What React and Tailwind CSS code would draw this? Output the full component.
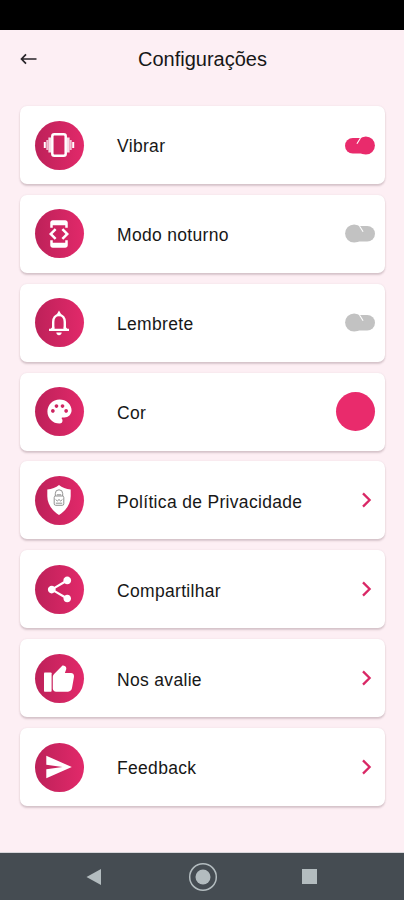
import { useState } from 'react'

import {
  MdDeveloperMode,
  MdPalette,
  MdShare
} from 'react-icons/md'

// ICONOS

function VibrateIcon() {
  return (
    <svg width="32" height="26" viewBox="0 0 32 26" fill="none" stroke="#fff">
      <rect x="9.300" y="2.300" width="13.400" height="21.400" rx="2" strokeWidth="2.500" />
      <path d="M6.800 5.500v15M25.200 5.500v15" strokeWidth="2.800" opacity=".85" />
      <path d="M4.300 8v10M27.700 8v10" strokeWidth="2" opacity=".7" />
      <path d="M1.800 10v6M30.200 10v6" strokeWidth="2" />
    </svg>
  )
}

function BellIcon() {
  return (
    <svg width="24" height="26" viewBox="0 0 24 26" fill="none">
      <path
        d="M6.200 20v-8c0-3.800 2.200-7 5.800-7s5.800 3.200 5.800 7v8"
        stroke="#fff"
        strokeWidth="2.400"
      />
      <path d="M12 .5 14.600 5H9.400zM2 18.800h20v2.300H2zM9.300 22.600h5.400c-.2 1.800-1.200 2.700-2.700 2.700s-2.500-.9-2.700-2.700z" fill="#fff" />
      <path d="M5.500 16.800h1.800v2.400H3.400zM18.500 16.800h-1.800v2.400h3.900z" fill="#fff" />
    </svg>
  )
}

function ShieldIcon() {
  return (
    <svg width="24" height="30" viewBox="0 0 24 30" fill="none">
      <path
        d="M12 0c3 2.500 7.200 4.200 11.700 4.500v6.800C23.700 19 19 25.500 12 30 5 25.500.3 19 .3 11.300V4.500C4.800 4.200 9 2.500 12 0z"
        fill="#fff"
      />
      <g stroke="#858585" strokeWidth=".9">
        <path d="M8.300 11V8.500a3.700 3.700 0 0 1 7.400 0V11" />
        <rect x="7.200" y="11" width="9.600" height="9.300" rx="1.500" />
        <path d="M8.600 14.500l1.700 1.500 1.700-1.500 1.700 1.500 1.700-1.500M8.800 18.200h6.400M9.800 9.800h4.400" />
      </g>
    </svg>
  )
}

function ThumbIcon() {
  return (
    <svg width="30" height="27" viewBox="0 0 30 27" fill="#fff">
      <rect x="0" y="7.500" width="7.600" height="19.200" rx=".8" />
      <path d="M8.800 11.800c0-1 .4-1.900 1.100-2.600L18 .9c.9-.9 4.300.1 4.300 2.300 0 1.600-.9 3.100-1.400 4.700h6.100c1.700 0 3 1.300 3 3 0 .9-.1 1.800-.3 2.700l-1.700 9.500c-.3 2.100-1.900 3.600-4 3.600H12.100c-1.900 0-3.300-1.400-3.300-3.300z" />
    </svg>
  )
}

function SendIcon() {
  return (
    <svg width="26" height="24" viewBox="0 0 26 24" fill="#fff">
      <path d="M.300.800 25.800 12 .300 23.200v-9L16.500 12 .300 9.800z" />
    </svg>
  )
}

function ChevronIcon() {
  return (
    <svg
      className="mr-[2px]"
      width="12"
      height="18"
      viewBox="0 0 12 18"
      fill="none"
      stroke="#d92765"
      strokeWidth="2.300"
    >
      <path d="M2 2.400 8.600 9 2 15.600" />
    </svg>
  )
}

// INTERRUPTOR

function Toggle({ active, onClick }) {
  return (
    <button
      className={active ? 'text-[#e92b6c]' : 'text-[#c2c2c2]'}
      onClick={onClick}
    >
      <svg
        className={active ? 'block' : 'block -scale-x-100'}
        width="30"
        height="19"
        viewBox="0 0 30 19"
        fill="currentColor"
      >
        <rect x="0" y="2" width="28" height="15.500" rx="7.750" />
        <circle cx="20.800" cy="9.500" r="9.100" />
        <path d="M15.500 2 11.900 7.800" stroke="#fff" strokeWidth="1.100" />
      </svg>
    </button>
  )
}

const opciones = [
  { id: 'vibrar', label: 'Vibrar', icon: <VibrateIcon />, tipo: 'toggle' },
  { id: 'noturno', label: 'Modo noturno', icon: <MdDeveloperMode size={30} />, tipo: 'toggle' },
  { id: 'lembrete', label: 'Lembrete', icon: <BellIcon />, tipo: 'toggle' },
  { id: 'cor', label: 'Cor', icon: <MdPalette size={29} />, tipo: 'color' },
  { id: 'privacidade', label: 'Política de Privacidade', icon: <ShieldIcon />, tipo: 'link' },
  { id: 'compartilhar', label: 'Compartilhar', icon: <MdShare size={31} />, tipo: 'link' },
  { id: 'avaliar', label: 'Nos avalie', icon: <ThumbIcon />, tipo: 'link' },
  { id: 'feedback', label: 'Feedback', icon: <SendIcon />, tipo: 'link' }
]

function App() {

  const [activos, setActivos] = useState({ vibrar: true })

  const cambiar = (id) => {
    setActivos({ ...activos, [id]: !activos[id] })
  }

  return (

    <div className="flex h-[900px] w-[404px] flex-col overflow-hidden bg-[#fdeff4] font-['Liberation_Sans',Arial,sans-serif] text-[#171717]">

      {/* BARRA DE ESTADO */}

      <div className="h-[30px] shrink-0 bg-black" />

      {/* ENCABEZADO */}

      <header className="grid h-[76px] shrink-0 grid-cols-[60px_1fr_60px] pt-[14px]">

        <button className="flex h-[30px] items-center pl-5">
          <svg width="18" height="14" viewBox="0 0 18 14" fill="none" stroke="#292529" strokeWidth="1.700">
            <path d="M1.500 7H16.500M6 2.300 1.500 7 6 11.700" />
          </svg>
        </button>

        <h1 className="pl-px text-center text-[20px] leading-[30px]">
          Configurações
        </h1>

      </header>

      {/* OPCIONES */}

      <main className="flex flex-1 flex-col gap-[10.860px] pr-[19px] pl-5">

        {opciones.map((opcion) => (

          <div
            key={opcion.id}
            className="flex h-[78px] shrink-0 items-center rounded-[7px] bg-white pr-[10px] pl-[15px] shadow-[0_2px_2px_rgba(90,60,70,0.22),0_0_2px_rgba(90,60,70,0.1)]"
          >

            <div className="flex size-[49px] items-center justify-center rounded-full bg-linear-to-r from-[#bd2159] to-[#e2296a] pr-px text-white">
              {opcion.icon}
            </div>

            <span className="ml-[33px] flex-1 pt-[3px] text-[17.500px] tracking-[0.320px]">
              {opcion.label}
            </span>

            {opcion.tipo === 'toggle' && (
              <Toggle
                active={activos[opcion.id]}
                onClick={() => cambiar(opcion.id)}
              />
            )}

            {opcion.tipo === 'color' && (
              <div className="size-[39px] rounded-full bg-[#e92b6c]" />
            )}

            {opcion.tipo === 'link' && <ChevronIcon />}

          </div>

        ))}

      </main>

      {/* NAVEGACIÓN */}

      <nav className="flex h-[48px] shrink-0 items-center border-t border-[#d8d6da] bg-[#454c52] pl-[86px] text-[#b3bcbf]">

        <svg width="16" height="18" viewBox="0 0 16 18" fill="currentColor">
          <path d="M15 1v16L.500 9z" />
        </svg>

        <svg className="ml-[86px]" width="30" height="30" viewBox="0 0 30 30" fill="currentColor">
          <circle cx="15" cy="15" r="13.300" fill="none" stroke="currentColor" strokeWidth="1.500" />
          <circle cx="15" cy="15" r="7.500" />
        </svg>

        <div className="ml-[84px] size-[15px] bg-[#b3bcbf]" />

      </nav>

    </div>
  )
}

export default App
